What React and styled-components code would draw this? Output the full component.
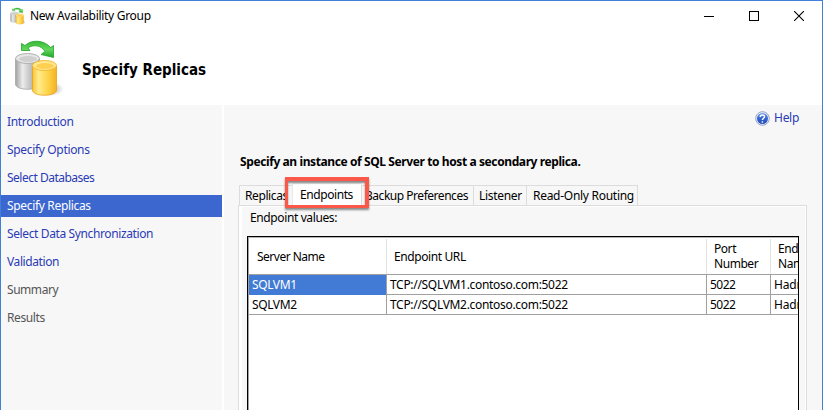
import React from "react";
import styled, { createGlobalStyle } from "styled-components";

const GlobalStyle = createGlobalStyle`
  * { box-sizing: border-box; }
  body { margin: 0; background: #fff; overflow: hidden; }
`;

const Window = styled.div`
  width: 823px;
  height: 410px;
  display: flex;
  flex-direction: column;
  overflow: hidden;
  border: 1px solid #3f80d8;
  border-bottom: 0;
  background: #fff;
  color: #000;
  font: 12px/16px "Noto Sans", "Open Sans", sans-serif;
  white-space: nowrap;
`;

const Label = styled.span`
  letter-spacing: ${(p) => p.$track ?? -0.38}px;
`;

const TitleBar = styled.header`
  height: 29px;
  display: flex;
  align-items: center;
  padding: 1px 0 0 9px;
  gap: 4px;
`;

const WindowControls = styled.div`
  display: flex;
  gap: 35px;
  margin-left: auto;
  margin-right: 18px;
  padding-bottom: 1px;
  svg { display: block; }
`;

const PageHeader = styled.div`
  height: 75px;
  display: flex;
  align-items: center;
  padding-left: 13px;
`;

const HeaderIcon = styled.div`
  width: 50px;
  height: 60px;
  margin-right: 18px;
`;

const PageTitle = styled.h1`
  margin: 4px 0 0;
  font: bold 15px/20px "DejaVu Sans Condensed", "DejaVu Sans", sans-serif;
  font-stretch: condensed;
`;

const Body = styled.div`
  flex: 1;
  display: flex;
  gap: 2px;
  min-height: 0;
`;

const Sidebar = styled.nav`
  width: 221px;
  display: flex;
  flex-direction: column;
  gap: 6px;
  padding-top: 6px;
  background: #f7f7f7;
`;

const Step = styled.div`
  height: 22px;
  padding-left: 6px;
  line-height: 22px;
  color: ${(p) => (p.$state === "current" ? "#fff" : p.$state === "pending" ? "#555" : "#2a3bb5")};
  background: ${(p) => (p.$state === "current" ? "#3b67cf" : "transparent")};
`;

const Main = styled.main`
  flex: 1;
  min-width: 0;
  display: flex;
  flex-direction: column;
  background: #f7f7f7;
`;

const HelpLink = styled.div`
  height: 16px;
  display: flex;
  align-items: center;
  align-self: flex-end;
  gap: 4px;
  margin: 5px 23px 0 0;
  color: #2a3bb5;
`;

const Instruction = styled.div`
  margin: 28px 0 0 16px;
  font-weight: bold;
`;

const TabStrip = styled.div`
  height: 22px;
  display: flex;
  align-items: flex-end;
  margin: 13px 0 0 15px;
`;

const Tab = styled.div`
  position: relative;
  width: ${(p) => p.$width}px;
  height: ${(p) => (p.$active ? 22 : 20)}px;
  padding-left: ${(p) => p.$pad}px;
  line-height: ${(p) => (p.$active ? 21 : 20)}px;
  border: 1px solid ${(p) => (p.$active ? "#e8e8e8" : "#dcdcdc")};
  border-width: 1px ${(p) => (p.$last ? 1 : 0)}px 0 1px;
  background: ${(p) => (p.$active ? "#fff" : "#f7f7f7")};
`;

const Highlight = styled.div`
  position: absolute;
  left: -8px;
  top: -7px;
  width: 84px;
  height: 31px;
  border: 4px solid #fb5849;
  border-width: 4px 4px 3px 3px;
  box-shadow: 0 2px 2px rgba(0, 0, 0, 0.45), inset 0 2px 2px rgba(0, 0, 0, 0.45);
  z-index: 2;
`;

const TabPanel = styled.section`
  flex: 1;
  min-height: 0;
  display: flex;
  flex-direction: column;
  width: 569px;
  margin-left: 14px;
  padding: 4px 8px 0 8px;
  border: 1px solid #dcdcdc;
  border-bottom: 0;
  box-shadow: inset 3px 0 #fff, inset -1px 1px #fff;
`;

const PanelLabel = styled.div`
  height: 26px;
  padding-left: 3px;
`;

const Grid = styled.div`
  flex: 1;
  width: 552px;
  overflow: hidden;
  background: #fff;
  border: 1px solid #000;
  border-bottom: 0;
  box-shadow: inset 0 1px #b4b4b4, inset 1px 0 #a0a0a0;
`;

const GridRow = styled.div`
  display: grid;
  grid-template-columns: 139px 320px 64px 92px;
  height: ${(p) => (p.$header ? 38 : 20)}px;
  padding-top: ${(p) => (p.$header ? 2 : 0)}px;
  border-bottom: 1px solid #a0a0a0;
`;

const HeadCell = styled.div`
  display: flex;
  align-items: center;
  margin-left: ${(p) => (p.$first ? 1 : 0)}px;
  padding-left: ${(p) => (p.$first ? 8 : 7)}px;
  padding-bottom: ${(p) => (p.$twoLine ? 2 : 0)}px;
  line-height: 15px;
  white-space: pre-line;
  border-right: 1px solid #e2e2e2;
`;

const Cell = styled.div`
  margin-left: ${(p) => (p.$first ? 1 : 0)}px;
  padding-left: 3px;
  line-height: 20px;
  color: ${(p) => (p.$selected ? "#fff" : "#000")};
  background: ${(p) => (p.$selected ? "#417bd5" : "transparent")};
  background-clip: padding-box;
  border-right: 1px solid #a0a0a0;
`;

function DatabaseIcon({ id, width, height }) {
  return (
    <svg width={width} height={height} viewBox="0 0 50 60" preserveAspectRatio="none">
      <defs>
        <linearGradient id={`${id}-gray`}>
          <stop offset="0" stopColor="#a2a2a2" />
          <stop offset=".3" stopColor="#ececec" />
          <stop offset=".6" stopColor="#c4c4c4" />
          <stop offset="1" stopColor="#999" />
        </linearGradient>
        <linearGradient id={`${id}-gold`}>
          <stop offset="0" stopColor="#f9c435" />
          <stop offset=".25" stopColor="#ffeb8c" />
          <stop offset=".6" stopColor="#ffd650" />
          <stop offset="1" stopColor="#f4b320" />
        </linearGradient>
        <linearGradient id={`${id}-green`} x2="0" y2="1">
          <stop offset="0" stopColor="#38b838" />
          <stop offset=".5" stopColor="#62d85a" />
          <stop offset="1" stopColor="#22a52b" />
        </linearGradient>
        <radialGradient id={`${id}-shade`}>
          <stop offset="0" stopColor="#777" stopOpacity=".65" />
          <stop offset="1" stopColor="#777" stopOpacity="0" />
        </radialGradient>
      </defs>
      <ellipse cx="37" cy="51" rx="12.500" ry="7" fill={`url(#${id}-shade)`} />
      <path d="M1.5 21V46C1.5 53 25.500 53 25.500 46V21Z" fill={`url(#${id}-gray)`} stroke="#a5a5a5" strokeWidth=".8" />
      <ellipse cx="13.500" cy="20.500" rx="12" ry="5" fill="#e6e6e6" stroke="#aaa" strokeWidth=".9" />
      <ellipse cx="14" cy="21" rx="9" ry="3" fill="#cfcfcf" />
      <path d="M18.500 28V52C18.500 59 42.500 59 42.500 52V28Z" fill={`url(#${id}-gold)`} stroke="#e9a21a" strokeWidth=".8" />
      <ellipse cx="30.500" cy="27.500" rx="12" ry="5" fill="#ffe88e" stroke="#f2b42c" strokeWidth=".9" />
      <ellipse cx="31" cy="28" rx="9" ry="3" fill="#fdd054" />
      <path
        d="M7.500 5.500L11 7.500C17 1.500 30 1.500 36.500 9.500L39.500 7.500V19.500L27 16.500L31 13.500C28 7.500 19 6 14 10L16 12.500H7.500Z"
        fill={`url(#${id}-green)`}
        stroke="#25a52c"
        strokeWidth=".8"
        strokeLinejoin="round"
      />
    </svg>
  );
}

function HelpIcon() {
  return (
    <svg width="15" height="15" viewBox="0 0 15 15">
      <defs>
        <linearGradient id="help-blue" x2="0" y2="1">
          <stop offset="0" stopColor="#759bea" />
          <stop offset=".5" stopColor="#3265cf" />
          <stop offset="1" stopColor="#284dbd" />
        </linearGradient>
      </defs>
      <circle cx="7.500" cy="7.500" r="6.800" fill="#eef3fb" stroke="#8799bd" strokeWidth=".9" />
      <circle cx="7.500" cy="7.500" r="5.500" fill="url(#help-blue)" />
      <path d="M5.200 6C5.200 3.300 9.600 3.300 9.500 5.800C9.500 7.200 7.500 7.300 7.400 9M7.400 10.200V11.700" fill="none" stroke="#fff" strokeWidth="1.400" />
    </svg>
  );
}

const steps = [
  ["Introduction", "done", -0.33],
  ["Specify Options", "done", -0.33],
  ["Select Databases", "done", -0.5],
  ["Specify Replicas", "current", -0.33],
  ["Select Data Synchronization", "done", -0.38],
  ["Validation", "done", -0.4],
  ["Summary", "pending", -0.45],
  ["Results", "pending", -0.4],
];

const tabs = [
  { name: "Replicas", width: 53, pad: 5, track: -0.4 },
  { name: "Endpoints", width: 69, pad: 7, track: -0.42, active: true },
  { name: "Backup Preferences", width: 112, pad: 3, track: -0.47 },
  { name: "Listener", width: 53, pad: 5, track: -0.3 },
  { name: "Read-Only Routing", width: 112, pad: 6, track: -0.28, last: true },
];

const columns = [
  ["Server Name", -0.5],
  ["Endpoint URL", -0.4],
  ["Port\nNumber", -0.45],
  ["Endpoint\nName", -0.38],
];
const tracking = [-0.38, -0.31, -0.5, -0.2];
const rows = [
  ["SQLVM1", "TCP://SQLVM1.contoso.com:5022", "5022", "Hadr_endpoint"],
  ["SQLVM2", "TCP://SQLVM2.contoso.com:5022", "5022", "Hadr_endpoint"],
];

export default function App() {
  return (
    <>
      <GlobalStyle />
      <Window>
        <TitleBar>
          <DatabaseIcon id="small" width={16} height={18} />
          <Label $track={-0.3}>New Availability Group</Label>
          <WindowControls>
            <svg width="10" height="10" shapeRendering="crispEdges"><path d="M0 5.500H10" stroke="#000" /></svg>
            <svg width="10" height="10" shapeRendering="crispEdges"><rect x=".5" y=".5" width="9" height="9" fill="none" stroke="#000" /></svg>
            <svg width="10" height="10"><path d="M0 0L10 10M10 0L0 10" stroke="#000" strokeWidth="1.100" /></svg>
          </WindowControls>
        </TitleBar>
        <PageHeader>
          <HeaderIcon><DatabaseIcon id="large" width={50} height={60} /></HeaderIcon>
          <PageTitle>Specify Replicas</PageTitle>
        </PageHeader>
        <Body>
          <Sidebar>
            {steps.map(([name, state, track]) => (
              <Step key={name} $state={state}><Label $track={track}>{name}</Label></Step>
            ))}
          </Sidebar>
          <Main>
            <HelpLink><HelpIcon /><Label $track={-0.3}>Help</Label></HelpLink>
            <Instruction><Label $track={-0.4}>Specify an instance of SQL Server to host a secondary replica.</Label></Instruction>
            <TabStrip>
              {tabs.map((tab) => (
                <Tab key={tab.name} $width={tab.width} $pad={tab.pad} $active={tab.active} $last={tab.last}>
                  <Label $track={tab.track}>{tab.name}</Label>
                  {tab.active && <Highlight />}
                </Tab>
              ))}
            </TabStrip>
            <TabPanel>
              <PanelLabel><Label>Endpoint values:</Label></PanelLabel>
              <Grid>
                <GridRow $header>
                  {columns.map(([name, track], i) => (
                    <HeadCell key={name} $first={i === 0} $twoLine={name.includes("\n")}>
                      <Label $track={track}>{name}</Label>
                    </HeadCell>
                  ))}
                </GridRow>
                {rows.map((row, r) => (
                  <GridRow key={row[0]}>
                    {row.map((value, i) => (
                      <Cell key={i} $first={i === 0} $selected={r === 0 && i === 0}><Label $track={tracking[i]}>{value}</Label></Cell>
                    ))}
                  </GridRow>
                ))}
              </Grid>
            </TabPanel>
          </Main>
        </Body>
      </Window>
    </>
  );
}
